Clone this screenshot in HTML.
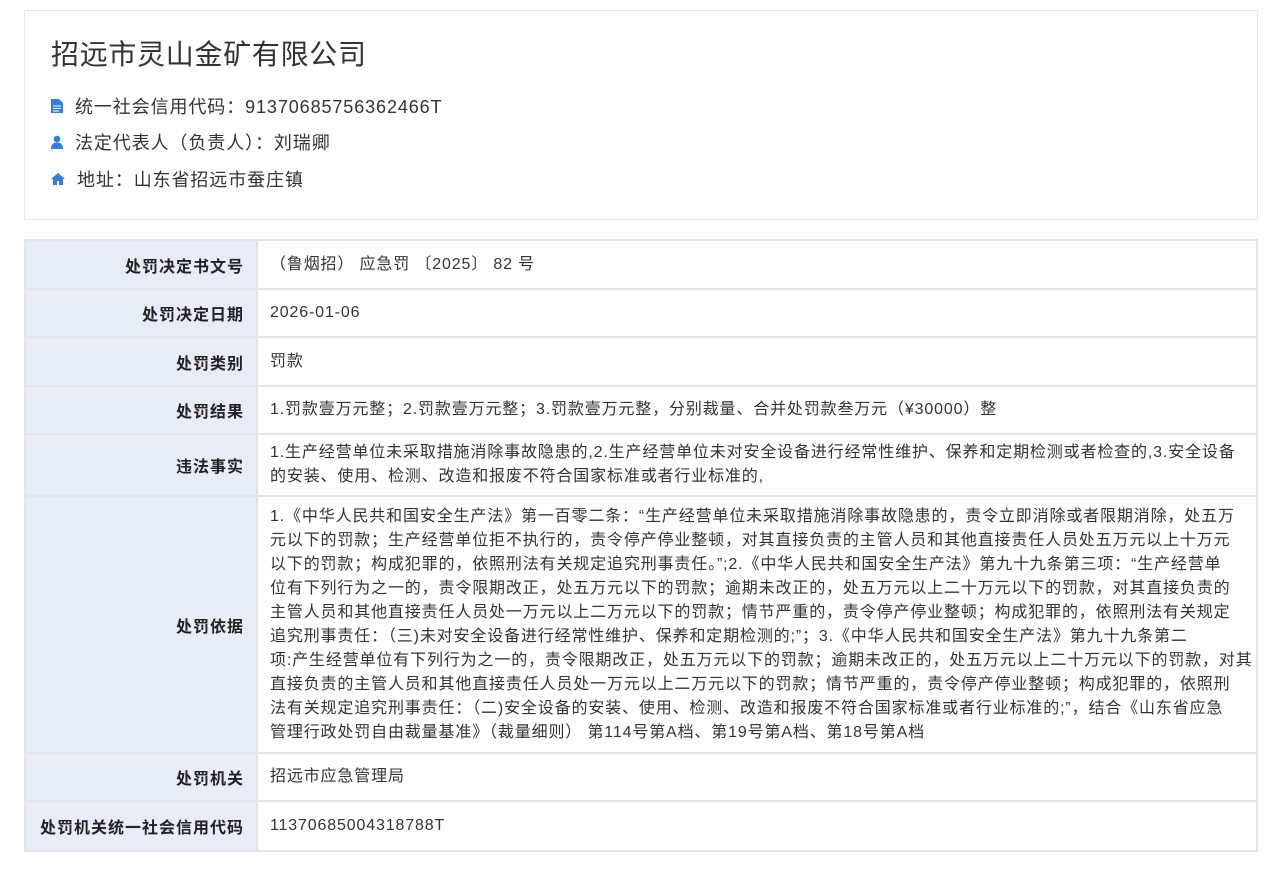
<!DOCTYPE html>
<html><head><meta charset="utf-8"><style>
*{margin:0;padding:0;box-sizing:border-box}
body{width:1268px;height:872px;background:#fff;font-family:"Liberation Sans","Noto Sans CJK SC",sans-serif;color:#333;position:relative}
.card{position:absolute;left:24px;top:10px;width:1234px;height:210px;border:1px solid #e6e6e6;background:#fff}
.card h1{position:absolute;left:26px;top:22px;font-size:28px;font-weight:normal;color:#333;letter-spacing:0.7px}
.info{position:absolute;left:26px;font-size:18px;color:#333;display:flex;align-items:center;letter-spacing:0.9px}
.info svg{margin-right:12px}
table{position:absolute;left:24px;top:239px;width:1234px;border-collapse:collapse;table-layout:fixed;font-size:16px;border:2px solid #ddd;letter-spacing:0.85px}
td{border:2px solid #e4e4e4;vertical-align:middle}
td.l{background:#e8ecf6;text-align:right;font-weight:bold;padding-right:12px;color:#222;letter-spacing:1px;white-space:nowrap}
td.r{padding:0 12px;color:#333;line-height:24px;white-space:nowrap;overflow:hidden}
</style></head><body>
<div class="card">
<h1>招远市灵山金矿有限公司</h1>
<div class="info" style="top:82px"><svg width="12" height="14" viewBox="0 0 12 14"><path d="M0 0h8l4 4v10H0z" fill="#2f7fe0"/><path d="M2 7h8M2 9.5h8M2 12h6" stroke="#fff" stroke-width="1"/></svg>统一社会信用代码：91370685756362466T</div>
<div class="info" style="top:118px"><svg width="12" height="14" viewBox="0 0 12 14"><circle cx="6" cy="4" r="3.3" fill="#2f7fe0"/><path d="M0 14c0-5 2.5-6.5 6-6.5s6 1.5 6 6.5z" fill="#2f7fe0"/></svg>法定代表人（负责人）：刘瑞卿</div>
<div class="info" style="top:155px"><svg width="14" height="12" viewBox="0 0 14 12"><path d="M7 0L0 6h2v6h4V8h2v4h4V6h2z" fill="#2f7fe0"/></svg>地址：山东省招远市蚕庄镇</div>
</div>
<table>
<colgroup><col style="width:232px"><col></colgroup>
<tr style="height:49px"><td class="l">处罚决定书文号</td><td class="r">（鲁烟招） 应急罚 〔2025〕 82 号</td></tr>
<tr style="height:48px"><td class="l">处罚决定日期</td><td class="r">2026-01-06</td></tr>
<tr style="height:49px"><td class="l">处罚类别</td><td class="r">罚款</td></tr>
<tr style="height:48px"><td class="l">处罚结果</td><td class="r">1.罚款壹万元整；2.罚款壹万元整；3.罚款壹万元整，分别裁量、合并处罚款叁万元（¥30000）整</td></tr>
<tr style="height:62px"><td class="l">违法事实</td><td class="r">1.生产经营单位未采取措施消除事故隐患的,2.生产经营单位未对安全设备进行经常性维护、保养和定期检测或者检查的,3.安全设备<br>的安装、使用、检测、改造和报废不符合国家标准或者行业标准的,</td></tr>
<tr style="height:257px"><td class="l">处罚依据</td><td class="r">1.《中华人民共和国安全生产法》第一百零二条：“生产经营单位未采取措施消除事故隐患的，责令立即消除或者限期消除，处五万<br>元以下的罚款；生产经营单位拒不执行的，责令停产停业整顿，对其直接负责的主管人员和其他直接责任人员处五万元以上十万元<br>以下的罚款；构成犯罪的，依照刑法有关规定追究刑事责任。”;2.《中华人民共和国安全生产法》第九十九条第三项：“生产经营单<br>位有下列行为之一的，责令限期改正，处五万元以下的罚款；逾期未改正的，处五万元以上二十万元以下的罚款，对其直接负责的<br>主管人员和其他直接责任人员处一万元以上二万元以下的罚款；情节严重的，责令停产停业整顿；构成犯罪的，依照刑法有关规定<br>追究刑事责任：（三)未对安全设备进行经常性维护、保养和定期检测的;”；3.《中华人民共和国安全生产法》第九十九条第二<br>项:产生经营单位有下列行为之一的，责令限期改正，处五万元以下的罚款；逾期未改正的，处五万元以上二十万元以下的罚款，对其<br>直接负责的主管人员和其他直接责任人员处一万元以上二万元以下的罚款；情节严重的，责令停产停业整顿；构成犯罪的，依照刑<br>法有关规定追究刑事责任：（二)安全设备的安装、使用、检测、改造和报废不符合国家标准或者行业标准的;”，结合《山东省应急<br>管理行政处罚自由裁量基准》（裁量细则） 第114号第A档、第19号第A档、第18号第A档</td></tr>
<tr style="height:48px"><td class="l">处罚机关</td><td class="r">招远市应急管理局</td></tr>
<tr style="height:50px"><td class="l">处罚机关统一社会信用代码</td><td class="r">11370685004318788T</td></tr>
</table>
</body></html>
